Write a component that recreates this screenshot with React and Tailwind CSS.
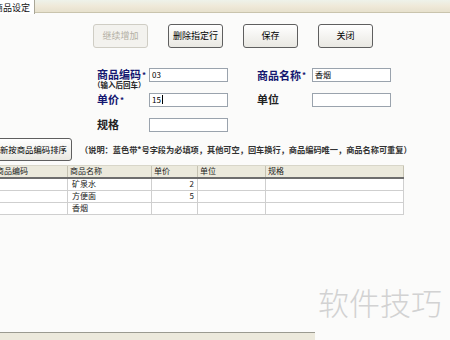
import React from 'react';

const font = { fontFamily: '"Noto Sans CJK SC", "Liberation Sans", sans-serif' };

const Btn = ({ children, disabled }) => (
    <div
        className={
            'w-[55px] h-[24px] flex items-center justify-center rounded-[3px] border text-[9px] ' +
            (disabled
                ? 'border-[#cfcdc4] bg-[#f3f2ee] text-[#b3b0a4]'
                : 'border-[#5f5f5f] bg-gradient-to-b from-white to-[#e9e8e2] text-black')
        }
    >
        {children}
    </div>
);

const Input = ({ value, cursor }) => (
    <div className="w-[79px] h-[14px] border border-[#9aa3ad] bg-white flex items-center pl-[2px] text-[8px] text-black leading-none">
        {value}
        {cursor && <span className="w-px h-[9px] bg-black ml-px" />}
    </div>
);

const Label = ({ children, star, w }) => (
    <div className={'flex items-center text-[11px] font-bold leading-none ' + w + (star ? ' text-[#141670]' : ' text-[#222]')}>
        {children}
        {star && <span className="text-[8px] ml-px">*</span>}
    </div>
);

const cols = [
    { name: '商品编码', w: 'w-[68px]' },
    { name: '商品名称', w: 'w-[84px]' },
    { name: '单价', w: 'w-[46px]' },
    { name: '单位', w: 'w-[68px]' },
    { name: '规格', w: 'w-[138px]' },
];

const rows = [
    ['', '矿泉水', '2', '', ''],
    ['', '方便面', '5', '', ''],
    ['', '香烟', '', '', ''],
];

export default function App() {
    return (
        <div className="relative w-[450px] h-[340px] overflow-hidden bg-[#fbfbfa] flex flex-col" style={font}>
            {/* tab strip */}
            <div className="h-[14px] flex shrink-0">
                <div className="w-[35px] h-[14px] bg-white border-r border-[#a9a697] overflow-hidden flex items-center">
                    <span className="text-[9px] leading-none whitespace-nowrap -ml-[6px] text-[#111]">商品设定</span>
                </div>
                <div className="flex-1 h-[13px] bg-gradient-to-b from-[#eef2ea] via-[#efe9d9] to-[#e7e1cd] border-b border-[#c9c4ad]" />
            </div>

            {/* buttons */}
            <div className="flex gap-[20px] pl-[93px] mt-[10px]">
                <Btn disabled>继续增加</Btn>
                <Btn>删除指定行</Btn>
                <Btn>保存</Btn>
                <Btn>关闭</Btn>
            </div>

            {/* form */}
            <div className="flex flex-col mt-[20px] pl-[97px]">
                <div className="flex items-start">
                    <div className="w-[52px] flex flex-col pt-[1px]">
                        <Label star w="">商品编码</Label>
                        <span className="text-[7.5px] leading-none mt-[1px] -ml-[4px] whitespace-nowrap text-[#222] font-bold">（输入后回车）</span>
                    </div>
                    <Input value="03" />
                    <div className="w-[29px]" />
                    <Label star w="w-[55px] h-[14px]">商品名称</Label>
                    <Input value="香烟" />
                </div>
                <div className="flex items-center mt-[4px]">
                    <Label star w="w-[52px]">单价</Label>
                    <Input value="15" cursor />
                    <div className="w-[29px]" />
                    <Label w="w-[55px]">单位</Label>
                    <Input value="" />
                </div>
                <div className="flex items-center mt-[11px]">
                    <Label w="w-[52px]">规格</Label>
                    <Input value="" />
                </div>
            </div>

            {/* sort + note */}
            <div className="flex items-center mt-[6px]">
                <div className="w-[80px] h-[23px] -ml-[8px] rounded-[3px] border border-[#5f5f5f] bg-gradient-to-b from-white to-[#e9e8e2] flex items-center justify-end pr-[4px]">
                    <span className="text-[8.4px] leading-none whitespace-nowrap">重新按商品编码排序</span>
                </div>
                <span className="ml-[8px] text-[8.2px] font-bold leading-none whitespace-nowrap text-[#333]">
                    （说明：蓝色带*号字段为必填项，其他可空，回车换行，商品编码唯一，商品名称可重复）
                </span>
            </div>

            {/* table */}
            <div className="w-[404px] mt-[4px] text-[8px] leading-none text-[#222]">
                <div className="flex h-[14px] bg-[#ebe9dc] border-t border-[#d8d6c9] border-b-2 border-b-[#6d6d6d]">
                    {cols.map((c, i) => (
                        <div key={i} className={c.w + ' flex items-center pl-[2px] border-r border-[#c5c2b2] overflow-hidden whitespace-nowrap'}>
                            <span className={i === 0 ? '-ml-[6px]' : ''}>{c.name}</span>
                        </div>
                    ))}
                </div>
                {rows.map((r, ri) => (
                    <div key={ri} className="flex h-[12px] bg-white border-b border-[#cfcfcf]">
                        {r.map((v, ci) => (
                            <div
                                key={ci}
                                className={
                                    cols[ci].w +
                                    ' flex items-center border-r border-[#cfcfcf] ' +
                                    (ci === 2 ? 'justify-end pr-[3px]' : 'pl-[4px]')
                                }
                            >
                                {v}
                            </div>
                        ))}
                    </div>
                ))}
            </div>

            <div className="flex-1" />

            {/* bottom bar */}
            <div className="w-[315px] h-[8px] border-t border-[#9b9a90] bg-[#ece9dc] shrink-0" />

            {/* watermark */}
            <div className="absolute left-[318px] top-[286px] text-[31px] leading-none text-[#d2d2d2] font-light whitespace-nowrap">
                软件技巧
            </div>
        </div>
    );
}
